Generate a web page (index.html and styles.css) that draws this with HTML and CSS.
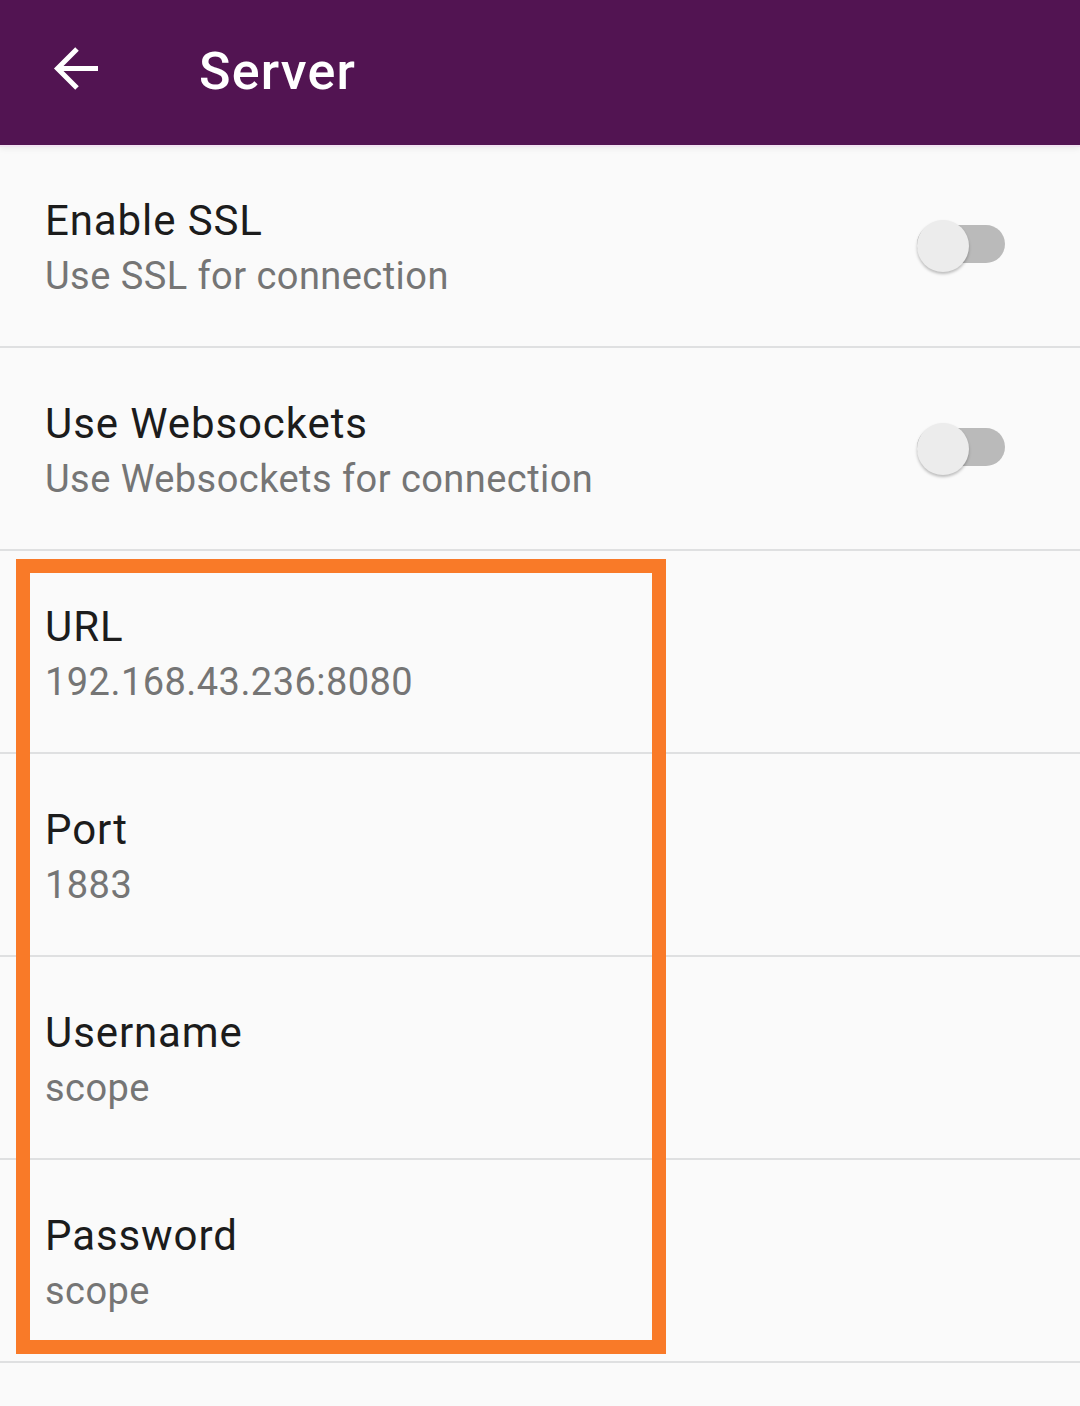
FILE: index.html
```html
<!DOCTYPE html>
<html lang="en">
<head>
<meta charset="utf-8">
<title>Server</title>
<link rel="stylesheet" href="styles.css">
</head>
<body>
<header class="appbar">
  <svg class="back" width="48" height="48" viewBox="0 0 48 48" aria-hidden="true">
    <path d="M45 22.5 H4 M24 3 L4.5 22.5 L24 42" fill="none" stroke="#ffffff" stroke-width="5" stroke-linecap="butt" stroke-linejoin="miter"/>
  </svg>
  <h1 class="title">Server</h1>
</header>
<main class="list">
  <div class="row">
    <div class="texts">
      <div class="label">Enable SSL</div>
      <div class="sub">Use SSL for connection</div>
    </div>
    <div class="switch"><span class="track"></span><span class="thumb"></span></div>
  </div>
  <div class="row">
    <div class="texts">
      <div class="label">Use Websockets</div>
      <div class="sub">Use Websockets for connection</div>
    </div>
    <div class="switch"><span class="track"></span><span class="thumb"></span></div>
  </div>
  <div class="row">
    <div class="texts">
      <div class="label">URL</div>
      <div class="sub">192.168.43.236:8080</div>
    </div>
  </div>
  <div class="row">
    <div class="texts">
      <div class="label">Port</div>
      <div class="sub">1883</div>
    </div>
  </div>
  <div class="row">
    <div class="texts">
      <div class="label">Username</div>
      <div class="sub">scope</div>
    </div>
  </div>
  <div class="row">
    <div class="texts">
      <div class="label">Password</div>
      <div class="sub">scope</div>
    </div>
  </div>
  <div class="highlight"></div>
</main>
</body>
</html>
```
FILE: styles.css
```css
html, body {
  margin: 0;
  padding: 0;
}
body {
  width: 1080px;
  height: 1406px;
  background: #fafafa;
  font-family: Roboto, "Liberation Sans", sans-serif;
  overflow: hidden;
}
.appbar {
  height: 145px;
  background: #521452;
  display: flex;
  align-items: center;
  padding-left: 53px;
  box-sizing: border-box;
  box-shadow: 0 2px 0 #f1e3f1, 0 4px 6px rgba(0, 0, 0, 0.06);
  position: relative;
  z-index: 1;
}
.back {
  display: block;
  margin-top: -6px;
}
.title {
  margin: -1px 0 0 98px;
  color: #ffffff;
  font-size: 52px;
  font-weight: 500;
  line-height: 1;
  letter-spacing: 1.2px;
}
.list {
  position: relative;
}
.row {
  height: 201px;
  border-bottom: 2px solid #dfe0e1;
  display: flex;
  align-items: center;
  padding: 0 75px 0 45px;
}
.texts {
  flex: 1;
  padding-top: 5px;
}
.label {
  font-size: 42px;
  line-height: 56px;
  color: #1c1c1c;
  letter-spacing: 0.9px;
}
.sub {
  font-size: 38px;
  line-height: 55px;
  color: #757575;
  letter-spacing: 0.45px;
}
.switch {
  position: relative;
  width: 88px;
  height: 56px;
}
.track {
  position: absolute;
  left: 0;
  top: 7px;
  width: 88px;
  height: 38px;
  border-radius: 19px;
  background: #bababa;
}
.thumb {
  position: absolute;
  left: 0;
  top: 2px;
  width: 52px;
  height: 52px;
  border-radius: 50%;
  background: #ececec;
  box-shadow: 0 2px 3px rgba(0, 0, 0, 0.25);
}
.highlight {
  position: absolute;
  left: 16px;
  top: 414px;
  width: 650px;
  height: 795px;
  border: 14px solid #f97a28;
  box-sizing: border-box;
}
```
